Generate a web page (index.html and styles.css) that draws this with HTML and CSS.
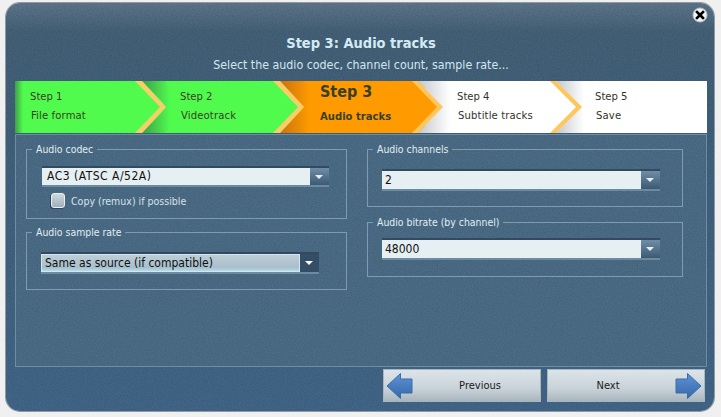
FILE: index.html
```html
<!DOCTYPE html>
<html lang="en">
  <head>
    <meta charset="UTF-8" />
    <title>Step 3: Audio tracks</title>
    <link rel="stylesheet" href="styles.css">
  </head>
  <body>
    <div class="window">
      <div class="panel">
        <button class="close" aria-label="Close">
          <svg width="16" height="16" viewBox="0 0 16 16">
            <circle cx="8" cy="8" r="7" fill="#f4f4f4" stroke="#b5bec6" />
            <path d="M5 5l6 6M11 5l-6 6" stroke="#000" stroke-width="2.6" stroke-linecap="square" />
          </svg>
        </button>

        <header class="header">
          <h1>Step 3: Audio tracks</h1>
          <p>Select the audio codec, channel count, sample rate...</p>
        </header>

        <div class="steps">
          <svg class="steps-bg" width="692" height="52" viewBox="0 0 692 52">
            <defs>
              <linearGradient id="shadeGreen">
                <stop offset="0" stop-color="#3f9e4a" />
                <stop offset="1" stop-color="#50fb4e" />
              </linearGradient>
              <linearGradient id="shadeOrange">
                <stop offset="0" stop-color="#c9720f" />
                <stop offset="1" stop-color="#ff9b00" />
              </linearGradient>
              <linearGradient id="shadeWhite">
                <stop offset="0" stop-color="#c4c8cc" />
                <stop offset="1" stop-color="#ffffff" />
              </linearGradient>
              <linearGradient id="fadeLeft">
                <stop offset="0" stop-color="#3f9e4a" />
                <stop offset="1" stop-color="#50fb4e" />
              </linearGradient>
            </defs>
            <rect width="692" height="52" fill="#fff" />
            <rect width="262" height="52" fill="#50fb4e" />
            <rect x="260" width="150" height="52" fill="#ff9b00" />
            <rect x="0" width="8" height="52" fill="url(#fadeLeft)" />
            <!-- shaded bands behind each chevron -->
            <path d="M127 0h28v52h-28l25-26z" fill="url(#shadeGreen)" />
            <path d="M265 0h30v52h-30l25-26z" fill="url(#shadeOrange)" />
            <path d="M403 0h32v52h-32l25-26z" fill="url(#shadeWhite)" />
            <path d="M541 0h28v52h-28l25-26z" fill="url(#shadeWhite)" />
            <!-- step bodies with their points -->
            <path d="M8 0H120L146 26 120 52H8z" fill="#50fb4e" />
            <path d="M150 0H258L284 26 258 52H150L172 26z" fill="#50fb4e" />
            <path d="M290 0H397L423 26 397 52H290L312 26z" fill="#ff9b00" />
            <!-- chevrons -->
            <path d="M120 0h7l24 26-24 26h-7l25-26z" fill="#f6cf6a" />
            <path d="M258 0h7l24 26-24 26h-7l25-26z" fill="#f6cf6a" />
            <path d="M397 0h6l25 26-25 26h-6l25-26z" fill="#fdc65f" />
            <path d="M535 0h6l26 26-26 26h-6l26-26z" fill="#fdc65f" />
          </svg>
          <div class="step step-1"><span>Step 1</span><span>File format</span></div>
          <div class="step step-2"><span>Step 2</span><span>Videotrack</span></div>
          <div class="step step-3 current"><span>Step 3</span><span>Audio tracks</span></div>
          <div class="step step-4"><span>Step 4</span><span>Subtitle tracks</span></div>
          <div class="step step-5"><span>Step 5</span><span>Save</span></div>
        </div>

        <main class="content">
          <div class="column column-left">
            <fieldset class="group group-codec">
              <legend>Audio codec</legend>
              <div class="combo combo-wide">
                <span class="combo-value">AC3 (ATSC A/52A)</span>
                <span class="combo-arrow"></span>
              </div>
              <label class="check"><span class="check-box"></span>Copy (remux) if possible</label>
            </fieldset>
            <fieldset class="group group-rate">
              <legend>Audio sample rate</legend>
              <div class="combo focused">
                <span class="combo-value">Same as source (if compatible)</span>
                <span class="combo-arrow"></span>
              </div>
            </fieldset>
          </div>
          <div class="column column-right">
            <fieldset class="group group-channels">
              <legend>Audio channels</legend>
              <div class="combo">
                <span class="combo-value">2</span>
                <span class="combo-arrow"></span>
              </div>
            </fieldset>
            <fieldset class="group group-bitrate">
              <legend>Audio bitrate (by channel)</legend>
              <div class="combo">
                <span class="combo-value">48000</span>
                <span class="combo-arrow"></span>
              </div>
            </fieldset>
          </div>
        </main>

        <footer class="footer">
          <button class="nav nav-prev">
            <svg width="27" height="28" viewBox="0 0 27 28">
              <defs>
                <linearGradient id="arrowPrev" x1="0" y1="0" x2="0" y2="1">
                  <stop offset="0" stop-color="#5f94d6" />
                  <stop offset="1" stop-color="#3566a8" />
                </linearGradient>
              </defs>
              <path d="M14.5 1.500L1 14l13.500 12.500V21H26V7H14.500z" fill="url(#arrowPrev)" stroke="#3a6cab" />
            </svg>
            <span>Previous</span>
          </button>
          <button class="nav nav-next">
            <span>Next</span>
            <svg width="27" height="28" viewBox="0 0 27 28">
              <defs>
                <linearGradient id="arrowNext" x1="0" y1="0" x2="0" y2="1">
                  <stop offset="0" stop-color="#5f94d6" />
                  <stop offset="1" stop-color="#3566a8" />
                </linearGradient>
              </defs>
              <path d="M12.500 1.500L26 14 12.500 26.500V21H1V7h11.500z" fill="url(#arrowNext)" stroke="#3a6cab" />
            </svg>
          </button>
        </footer>
      </div>
    </div>
  </body>
</html>
```

FILE: styles.css
```css
:root {
  --line-color: #7f9bb0;
  --light-text: #e3edf1;
  --dark-text: #3a3f22;
  --grain: url("data:image/svg+xml,%3Csvg xmlns='http://www.w3.org/2000/svg' width='200' height='200'%3E%3Cfilter id='n'%3E%3CfeTurbulence type='fractalNoise' baseFrequency='.8' numOctaves='2'/%3E%3CfeColorMatrix values='0 0 0 0 0 0 0 0 0 0 0 0 0 0 0 0 0 0 .22 -.06'/%3E%3C/filter%3E%3Crect width='200' height='200' filter='url(%23n)'/%3E%3C/svg%3E");
}
html,
body {
  margin: 0;
  padding: 0;
}
body {
  width: 721px;
  height: 417px;
  overflow: hidden;
  background: #f2f2f2;
  font-family: "DejaVu Sans", Tahoma, sans-serif;
  font-stretch: condensed;
  font-size: 11px;
}
.window {
  box-sizing: border-box;
  height: 417px;
  padding: 3px 7px 6px 6px;
  background: #f0f0f0;
}
.panel {
  position: relative;
  box-sizing: border-box;
  height: 408px;
  padding: 0 1px 0 9px;
  border-radius: 14px;
  background: var(--grain), linear-gradient(#5f778c 0, #456279 28px, #41617b 110px, #42678a 100%);
  box-shadow: 0 0 0 1px #8f9aa3;
}
.close {
  position: absolute;
  top: 4px;
  right: 6px;
  width: 16px;
  height: 16px;
  padding: 0;
  border: 0;
  background: none;
}
.close svg {
  display: block;
}
.header {
  height: 78px;
  box-sizing: border-box;
  padding: 32px 6px 0 0;
  text-align: center;
}
.header h1 {
  margin: 0;
  height: 16px;
  line-height: 16px;
  font-size: 14.500px;
  font-weight: bold;
  color: #d4ebf5;
}
.header p {
  margin: 7px 0 0;
  line-height: 15px;
  font-size: 12.300px;
  color: #d4e6ee;
}
.steps {
  position: relative;
  display: flex;
  width: 692px;
  height: 52px;
}
.steps-bg {
  position: absolute;
  top: 0;
  left: 0;
}
.step {
  position: relative;
  box-sizing: border-box;
  display: flex;
  flex-direction: column;
  gap: 7px;
  padding-top: 10px;
  padding-left: 15px;
  line-height: 12px;
  font-size: 11.200px;
  color: var(--dark-text);
}
.step span:last-child {
  margin-left: 1px;
  letter-spacing: 0.13px;
}
.step-1 {
  width: 150px;
}
.step-2 {
  width: 140px;
}
.step-3 {
  width: 137px;
}
.step-4 {
  width: 138px;
}
.step-3.current {
  gap: 9px;
  padding-top: 1px;
  font-weight: bold;
}
.step-3.current span:last-child {
  margin-left: 0;
  letter-spacing: 0;
}
.step-4,
.step-5 {
  color: #33332a;
}
.current span:first-child {
  line-height: 20px;
  font-size: 16px;
}
.content {
  box-sizing: border-box;
  display: grid;
  grid-template-columns: 321px 316px;
  column-gap: 20px;
  width: 692px;
  height: 233px;
  margin-top: 1px;
  padding: 7px 0 0 10px;
  border: 1px solid #6f8ca3;
  background: var(--grain), #4c6d88;
}
.column {
  display: flex;
  flex-direction: column;
}
.column-left {
  gap: 6px;
}
.column-right {
  gap: 8px;
}
.group {
  box-sizing: border-box;
  margin: 0;
  padding: 0 0 0 14px;
  min-width: 0;
  border: 1px solid var(--line-color);
}
.group legend {
  padding: 0 4px;
  margin-left: -9px;
  line-height: 14px;
  font-size: 10.400px;
  color: var(--light-text);
}
.group-codec {
  height: 77px;
}
.group-rate {
  height: 65px;
}
.group-channels {
  height: 65px;
}
.group-bitrate {
  height: 62px;
}
.combo {
  display: flex;
  box-sizing: border-box;
  width: 278px;
  height: 22px;
  margin-top: 13px;
  border-top: 2px solid #32495f;
  border-bottom: 2px solid #6d8ba0;
}
.combo-value {
  flex: 1;
  padding-left: 3px;
  line-height: 18px;
  font-size: 12px;
  color: #111;
  background: #e6eff1;
}
.combo-arrow {
  position: relative;
  width: 19px;
  background: linear-gradient(#6f8da5, #3c5a74);
}
.combo-arrow::after {
  content: "";
  position: absolute;
  top: 7px;
  left: 5px;
  border: 4px solid transparent;
  border-top: 4px solid #e8eef2;
  border-bottom: 0;
}
.combo-wide {
  width: 287px;
  height: 21px;
  margin: 10px 0 0 1px;
}
.combo-wide .combo-value {
  padding-left: 5px;
  line-height: 17px;
  letter-spacing: 0.5px;
}
.focused .combo-value {
  padding-left: 4px;
  background: linear-gradient(#eef4f6 0, #bccdd6 8%, #a9bfcb 75%, #b5e6f5 100%);
  box-shadow: inset 0 0 0 1px #cfe8f1;
}
.focused .combo-arrow {
  background: #344e68;
}
.focused .combo-arrow::after {
  border-top-color: #fff;
}
.group-bitrate .combo {
  margin-top: 9px;
}
.check {
  display: flex;
  align-items: center;
  gap: 6px;
  margin: 6px 0 0 10px;
  font-size: 10.500px;
  color: #d7e2e8;
}
.check-box {
  box-sizing: border-box;
  width: 14px;
  height: 15px;
  border: 1px solid #e9eef1;
  border-radius: 3px;
  background: linear-gradient(#cfd7dd, #9eb0bd);
  box-shadow: -1px 1px 0 #2e465c;
}
.footer {
  display: flex;
  justify-content: flex-end;
  gap: 6px;
  margin-top: 2px;
  padding-right: 8px;
}
.nav {
  position: relative;
  display: flex;
  align-items: center;
  justify-content: center;
  box-sizing: border-box;
  width: 158px;
  height: 33px;
  padding: 0;
  border: 1px solid #aab6bf;
  background: linear-gradient(#dbe4e8, #c8d3d9 60%, #a9b5bd);
  font: inherit;
  font-size: 11px;
  color: #1a1a1a;
}
.nav-prev {
  padding-left: 36px;
}
.nav-next {
  padding-right: 36px;
}
.nav svg {
  position: absolute;
  top: 2px;
}
.nav-prev svg {
  left: 2px;
}
.nav-next svg {
  right: 2px;
}
```
